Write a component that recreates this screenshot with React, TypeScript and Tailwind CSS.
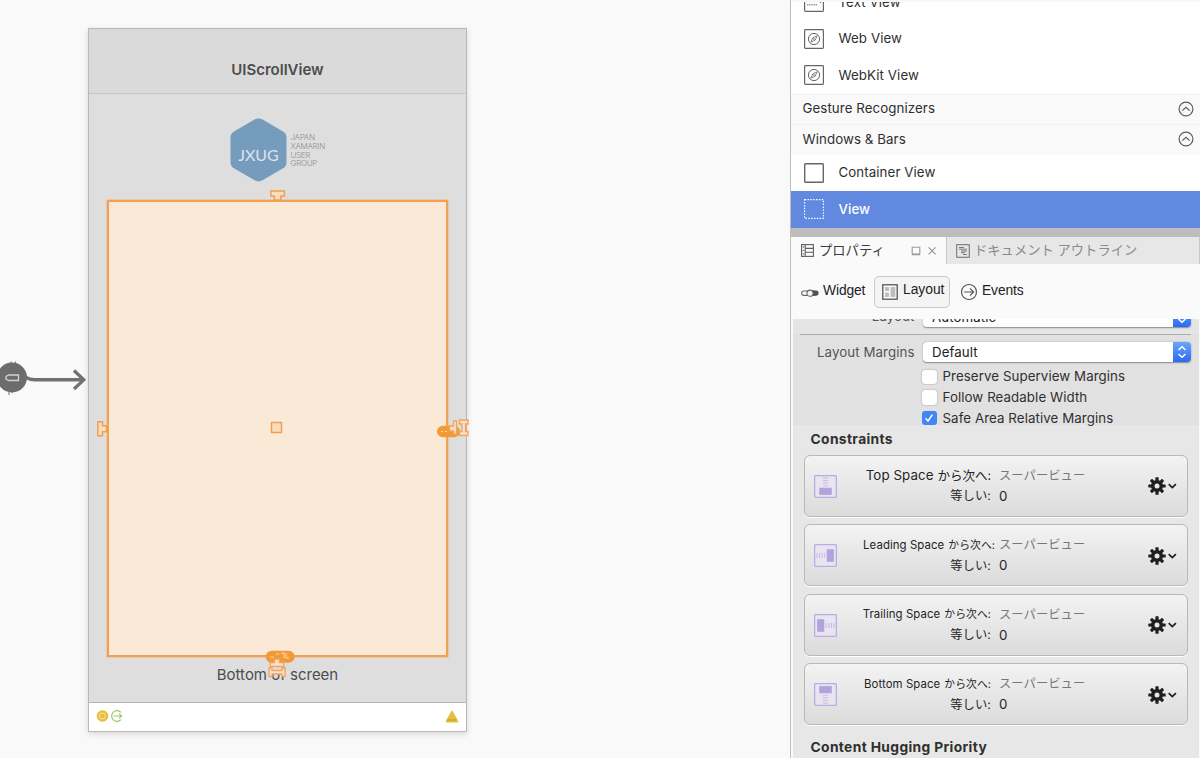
import type { ReactNode } from "react";

type Side = "top" | "leading" | "trailing" | "bottom";

type Constraint = {
  side: Side;
  name: string;
  nameClass: string;
  suffixClass: string;
};

const constraints: Constraint[] = [
  { side: "top", name: "Top Space", nameClass: "text-[13.3px]", suffixClass: "text-[12.6px] tracking-[-0.1px]" },
  { side: "leading", name: "Leading Space", nameClass: "text-[11.4px]", suffixClass: "-mr-1 text-[10.8px]" },
  { side: "trailing", name: "Trailing Space", nameClass: "text-[11.4px]", suffixClass: "text-[10.8px]" },
  { side: "bottom", name: "Bottom Space", nameClass: "text-[11.4px]", suffixClass: "text-[10.8px]" },
];

const rotations: Record<Side, number> = { top: 0, leading: -90, trailing: 90, bottom: 180 };

function CompassIcon() {
  return (
    <svg width="20" height="20" viewBox="0 0 20 20" fill="none" stroke="#666" className="shrink-0">
      <rect x="0.6" y="0.6" width="18.8" height="18.8" rx="0.8" strokeWidth="1.2" />
      <circle cx="10" cy="10" r="5.6" strokeWidth="1" />
      <path d="M13.1 6.9 11.2 11.2 6.9 13.1 8.8 8.8Z" strokeWidth="0.8" />
      <circle cx="10" cy="10" r="0.6" strokeWidth="0.6" />
    </svg>
  );
}

function TextViewIcon() {
  return (
    <svg width="20" height="20" viewBox="0 0 20 20" fill="none" stroke="#666" className="shrink-0">
      <rect x="0.6" y="0.6" width="18.8" height="18.8" rx="0.8" strokeWidth="1.2" />
      <path d="M3 12.8h10" stroke="#999" strokeWidth="1.6" strokeDasharray="1.2 0.6" />
      <path d="M16.5 9v2" strokeWidth="1.2" />
    </svg>
  );
}

function ChevronCircle() {
  return (
    <svg width="16" height="16" viewBox="0 0 16 16" fill="none" stroke="#5c5c5c" className="mb-px shrink-0">
      <circle cx="8" cy="8" r="6.9" strokeWidth="1.2" />
      <path d="M4.3 9.6 8 6.2l3.7 3.4" strokeWidth="1.2" />
    </svg>
  );
}

function ConstraintIcon({ side }: { side: Side }) {
  return (
    <svg width="23" height="23" viewBox="0 0 22 22" className="mt-px shrink-0">
      <rect x="0.6" y="0.6" width="20.8" height="20.8" rx="0.8" fill="#e8e5f0" stroke="#b9aee2" strokeWidth="1.2" />
      <g transform={`rotate(${rotations[side]} 11 11)`}>
        <rect x="5" y="12.2" width="12" height="6.8" fill="#b1a3dd" />
        <path d="M8.5 2.8h5M8.5 5.3h5M8.5 7.8h5M8.5 10.3h5" stroke="#c9c0e6" strokeWidth="1.1" />
      </g>
    </svg>
  );
}

function GearMenu() {
  return (
    <svg width="30" height="18" viewBox="0 0 30 18" className="mt-px shrink-0">
      <g fill="#1f1f1f">
        {[0, 45, 90, 135].map((angle) => (
          <rect key={angle} x="7.4" y="0.3" width="3.2" height="17.4" rx="0.5" transform={`rotate(${angle} 9 9)`} />
        ))}
        <circle cx="9" cy="9" r="6.1" />
      </g>
      <circle cx="9" cy="9" r="2.5" fill="#e7e7e7" />
      <path d="M20.7 7.2 24.3 10.6 27.9 7.2" fill="none" stroke="#1f1f1f" strokeWidth="1.7" />
    </svg>
  );
}

function LibraryRow({ icon, children, selected }: { icon: ReactNode; children: ReactNode; selected?: boolean }) {
  return (
    <div className={`flex h-[36.5px] items-center gap-[14.5px] pl-[13px] ${selected ? "bg-[#6289e0] font-medium text-white" : "bg-white"}`}>
      {icon}
      <span className="pt-px">{children}</span>
    </div>
  );
}

function LibraryHeader({ children }: { children: ReactNode }) {
  return (
    <div className="flex h-[30.5px] items-center justify-between border-t border-[#f2f2f2] bg-[#f9f9f9] pl-[11.5px] pr-[6.5px]">
      <span>{children}</span>
      <ChevronCircle />
    </div>
  );
}

function Library() {
  return (
    <div className="h-[227.5px] overflow-hidden border-t-2 border-[#f7f7f7] bg-white text-[13.3px] tracking-[0.08px] text-[#303030]">
      <div className="-mt-[18px]">
        <LibraryRow icon={<TextViewIcon />}>Text View</LibraryRow>
        <LibraryRow icon={<CompassIcon />}>Web View</LibraryRow>
        <LibraryRow icon={<CompassIcon />}>WebKit View</LibraryRow>
        <LibraryHeader>Gesture Recognizers</LibraryHeader>
        <LibraryHeader>Windows &amp; Bars</LibraryHeader>
        <LibraryRow
          icon={
            <svg width="20" height="20" viewBox="0 0 20 20" fill="none">
              <rect x="0.7" y="0.7" width="18.6" height="18.6" rx="0.8" stroke="#666" strokeWidth="1.4" />
            </svg>
          }
        >
          Container View
        </LibraryRow>
        <LibraryRow
          selected
          icon={
            <svg width="20" height="20" viewBox="0 0 20 20" fill="none">
              <rect x="0.6" y="0.6" width="18.8" height="18.8" stroke="#fff" strokeWidth="1.1" strokeDasharray="1.5 1.35" />
            </svg>
          }
        >
          View
        </LibraryRow>
      </div>
    </div>
  );
}

function Tabs() {
  return (
    <div className="flex h-[27px] text-[13.3px]">
      <div className="flex w-[155px] items-center bg-[#fafafa] pl-[10px] text-[#3c3c3c]">
        <svg width="13" height="13" viewBox="0 0 13 13" fill="none" stroke="#606060" strokeWidth="1.1">
          <rect x="0.6" y="0.6" width="11.8" height="11.8" />
          <path d="M4.2 1v11M4.5 4.4H12M4.5 8.3H12M1.6 3h1.5M1.6 6.5h1.5M1.6 10h1.5" />
        </svg>
        <span className="ml-[5px] w-[66px] whitespace-nowrap">プロパティ</span>
        <svg width="28" height="10" viewBox="0 0 28 10" fill="none" stroke="#999" className="ml-[26px]">
          <path d="M1.2 1.2h7.6v6.8H1.2zM1 8.6h8" strokeWidth="1.1" />
          <path d="m17.6 1.4 7 7m0-7-7 7" strokeWidth="1.2" />
        </svg>
      </div>
      <div className="flex flex-1 items-center border-l border-[#c9c9c9] bg-[#e7e7e7] pl-[9px] text-[#8b8b8b]">
        <svg width="14" height="14" viewBox="0 0 14 14" fill="none" stroke="#777" strokeWidth="1.1">
          <rect x="0.7" y="0.7" width="12.6" height="12.6" />
          <path d="M3 3.5h5M3 5.2h8M5 7h6M5 8.7h4M7 10.5h4" strokeWidth="1" />
        </svg>
        <span className="ml-[4px] whitespace-nowrap">ドキュメント アウトライン</span>
      </div>
      <div className="w-px bg-[#c9c9c9]" />
    </div>
  );
}

function Toolbar() {
  return (
    <div className="flex h-[55px] items-center bg-[#fafafa] pl-[10px] text-[13.8px] text-[#222]">
      <svg width="18" height="10" viewBox="0 0 18 10" className="mt-[2px]">
        <rect x="0.7" y="3" width="14" height="4.4" rx="2.2" fill="#fff" stroke="#666" strokeWidth="1.1" />
        <path d="M10 2.5h5a2.6 2.6 0 0 1 0 5.2h-5z" fill="#505050" />
        <circle cx="9" cy="5.2" r="3.1" fill="#f5f5f5" stroke="#666" strokeWidth="1.1" />
      </svg>
      <span className="-mt-px ml-[4px] w-[42px] font-['Liberation_Sans'] tracking-[-0.1px]">Widget</span>
      <div className="ml-[9px] flex h-[32px] w-[76px] items-center rounded-[5px] border border-[#c9c9c9] bg-[#f4f4f4] pl-[7px]">
        <svg width="16" height="16" viewBox="0 0 16 16">
          <rect x="0.8" y="0.8" width="14.4" height="14.4" fill="#fafafa" stroke="#555" strokeWidth="1.3" />
          <path d="M3 3h4v4H3zM3 8.5h4V13H3zM8.5 3h4.8v10H8.5z" fill="#bdbdbd" />
        </svg>
        <span className="-mt-[2px] ml-[5px] font-['Liberation_Sans']">Layout</span>
      </div>
      <svg width="18" height="18" viewBox="0 0 18 18" fill="none" stroke="#555" strokeWidth="1.2" className="ml-[10px] mt-px">
        <circle cx="9" cy="9" r="7.5" />
        <path d="M4.2 9h9.3M10 5.4 13.6 9 10 12.6" />
      </svg>
      <span className="-mt-px ml-[4px] font-['Liberation_Sans'] tracking-[-0.1px]">Events</span>
    </div>
  );
}

function Select({ children }: { children: ReactNode }) {
  return (
    <div className="flex h-[20.5px] w-[268px] overflow-hidden rounded-[4px] bg-white shadow-[0_0.5px_1.5px_rgba(0,0,0,0.4)]">
      <span className="flex-1 pl-[9px] leading-[20.5px] text-[#222]">{children}</span>
      <span className="flex w-[18px] items-center justify-center bg-gradient-to-b from-[#6da5fa] to-[#2a69f0]">
        <svg width="10" height="14" viewBox="0 0 10 14" fill="none" stroke="#fff" strokeWidth="1.5">
          <path d="M1.5 5 5 1.8 8.5 5M1.5 9 5 12.2 8.5 9" />
        </svg>
      </span>
    </div>
  );
}

function Check({ label, checked }: { label: string; checked?: boolean }) {
  return (
    <div className="flex h-[20.7px] items-center gap-[6px] pl-[129px] text-[#303030]">
      <span className={`-mt-px flex h-[14.5px] w-[14.5px] items-center justify-center rounded-[3px] ${checked ? "bg-[#4285f5]" : "bg-white shadow-[0_0_1.5px_rgba(0,0,0,0.45)]"}`}>
        {checked && (
          <svg width="10" height="10" viewBox="0 0 10 10" fill="none" stroke="#fff" strokeWidth="1.5">
            <path d="M1.6 5.3 4 8 8.4 1.6" />
          </svg>
        )}
      </span>
      <span>{label}</span>
    </div>
  );
}

function ConstraintCard({ constraint }: { constraint: Constraint }) {
  return (
    <div className="flex h-[62px] items-center rounded-[6px] border-[1.5px] border-[#b8b8b8] bg-gradient-to-b from-[#f3f3f3] to-[#dbdbdb] pl-[9px] pr-[9px] shadow-[0_1px_0_#fff]">
      <ConstraintIcon side={constraint.side} />
      <div className="flex flex-1 flex-col whitespace-nowrap pt-px text-[12.3px] text-[#252525]">
        <div className="flex h-[21px] items-center">
          <div className="flex w-[154.5px] shrink-0 items-baseline justify-end gap-[4px]">
            <span className={constraint.nameClass}>{constraint.name}</span>
            <span className={constraint.suffixClass}>から次へ:</span>
          </div>
          <span className="ml-[8px] tracking-[0.05px] text-[#777]">スーパービュー</span>
        </div>
        <div className="flex h-[20px] items-center">
          <span className="w-[154.5px] shrink-0 text-right">等しい:</span>
          <span className="ml-[8px] text-[13.3px]">0</span>
        </div>
      </div>
      <GearMenu />
    </div>
  );
}

function Properties() {
  return (
    <div className="ml-[2px] mr-px h-[439px] overflow-hidden bg-[#e7e7e7] text-[13.3px] tracking-[0.08px]">
      <div className="h-[106px] bg-[#e1e1e1]">
        <div className="h-[15px] overflow-hidden bg-[#e5e5e5]">
          <div className="-mt-[12.5px] flex items-center">
            <span className="w-[121.5px] text-right text-[#555]">Layout</span>
            <div className="ml-[8.5px]">
              <Select>Automatic</Select>
            </div>
          </div>
        </div>
        <div className="ml-[7px] mr-[8px] h-px bg-[#adadad]" />
        <div className="mb-[4.5px] mt-[6.5px] flex items-center">
          <span className="w-[121.5px] pt-px text-right text-[#555]">Layout Margins</span>
          <div className="ml-[8.5px]">
            <Select>Default</Select>
          </div>
        </div>
        <Check label="Preserve Superview Margins" />
        <Check label="Follow Readable Width" />
        <Check label="Safe Area Relative Margins" checked />
      </div>
      <h2 className="flex h-[29px] items-center pl-[17.5px] text-[13.8px] font-bold tracking-[0.36px] text-[#303030]">Constraints</h2>
      <div className="ml-[10.5px] mr-[11px] mt-[0.5px] flex flex-col gap-[7.5px]">
        {constraints.map((constraint) => (
          <ConstraintCard key={constraint.side} constraint={constraint} />
        ))}
      </div>
      <h2 className="mt-[12px] whitespace-nowrap pl-[17.5px] text-[13.8px] font-bold tracking-[0.36px] text-[#303030]">Content Hugging Priority</h2>
    </div>
  );
}

function Logo() {
  return (
    <div className="flex items-start pl-[141px] pt-[24px]">
      <div className="grid h-[64px] w-[57px] place-items-center">
        <svg width="57" height="64" viewBox="0 0 57 64" className="col-start-1 row-start-1">
          <path d="M24.5 1.6Q28.5-.6 32.5 1.6L53 13.6Q56.5 15.8 56.5 19.5V44.5Q56.5 48.2 53 50.3L32.5 62.3Q28.5 64.5 24.5 62.3L4 50.3Q.5 48.2.5 44.5V19.5Q.5 15.8 4 13.6Z" fill="#759bbd" />
        </svg>
        <span className="col-start-1 row-start-1 mt-[10px] font-['Lato'] text-[16px] leading-none text-[#dce5ee]">JXUG</span>
      </div>
      <div className="ml-[3.5px] mt-[15px] text-[8px] font-light leading-[8.8px] tracking-[-0.3px] text-[#8f8f8f]">
        <p>JAPAN</p>
        <p>XAMARIN</p>
        <p>USER</p>
        <p>GROUP</p>
      </div>
    </div>
  );
}

function Handles() {
  return (
    <svg width="480" height="500" viewBox="0 185 480 500" className="pointer-events-none absolute left-0 top-[185px]">
      <g fill="#fbdcbd" stroke="#f09f4f" strokeWidth="1.5" strokeLinejoin="round">
        <path d="M270.800 191h13.600v5h-3.600v4h-6.400v-4h-3.600z" />
        <path d="M97.800 421.800h4.700v4h4v6h-4v4h-4.700z" />
        <rect x="271.500" y="422.500" width="10" height="10" />
      </g>
      <rect x="437" y="425.700" width="23" height="11.500" rx="5.750" fill="#f39a38" />
      <path d="M441 431.500h2m2 0h2m2-1.500h3" stroke="#fbd7b0" />
      <rect x="265.700" y="650.700" width="29" height="12" rx="6" fill="#f39a38" />
      <path d="M270 657h4m2-3h3m2-1h3v5m2-5v5h3" fill="none" stroke="#fbd7b0" />
      <g fill="#fbe1c8" stroke="#f2a45a" strokeWidth="1.3">
        <path d="M456.500 421v13h-3v-3h-4v-5h4v-5z" />
        <path d="M459.500 420h8.500v4h-2.500v7.500h2.500v4h-8.500v-4h2.500v-7.500h-2.500z" />
        <path d="M274.500 659h5v3.500h4.200v4h-13.500v-4h4.300z" />
        <path d="M269 668h3v2.500h10V668h3v8.500h-3V674h-10v2.500h-3z" />
      </g>
    </svg>
  );
}

function EntryArrow() {
  return (
    <svg width="88" height="40" viewBox="0 360 88 40" className="absolute left-0 top-[360px]">
      <path d="M11 361.500v4M15.500 361.500v4M9 390v5M12 390v3" stroke="#717171" />
      <circle cx="12" cy="377.500" r="15" fill="#6c6c6c" />
      <path d="M9 375h9.500v5.500H9L6 379v-2.500z" fill="none" stroke="#d2d2d2" strokeWidth="1.3" />
      <path d="M25 377q5 2.800 10 2.800h49" fill="none" stroke="#717171" strokeWidth="3.500" />
      <path d="m74 370.500 9.800 9.300-9.800 9.200" fill="none" stroke="#717171" strokeWidth="3.200" />
    </svg>
  );
}

function Canvas() {
  return (
    <div className="relative w-[790px] shrink-0 bg-[#f9f9f9]">
      <div className="ml-[88px] mt-[28px] flex h-[704px] w-[379px] flex-col border border-[#b8b8b8] bg-[#dedede] shadow-[0_2px_6px_rgba(0,0,0,0.14)]">
        <div className="flex h-[65px] shrink-0 items-end justify-center border-b border-[#c6c6c6] bg-[#dadada] pb-[12px] text-[15px] font-semibold text-[#4d4d4d]">
          UIScrollView
        </div>
        <div className="h-[106px] shrink-0">
          <Logo />
        </div>
        <div className="ml-[17.500px] h-[457px] w-[341.500px] shrink-0 border-2 border-[#f1a153] bg-[#fbe9d8] shadow-[0_0_0_0.5px_#f3b376]" />
        <div className="flex-1 pt-[7px] text-center text-[15px] text-[#4d4d4d]">Bottom of screen</div>
        <div className="flex h-[29px] shrink-0 items-center border-t border-[#b5b5b5] bg-white pb-[2px] pl-[7px] pr-[7px]">
          <svg width="27" height="14" viewBox="0 0 27 14" fill="none">
            <circle cx="6.500" cy="7" r="5.800" fill="#e9bd3b" />
            <rect x="3.800" y="4.300" width="5.400" height="5.400" rx="1" stroke="#f7e5ae" />
            <path d="M25 3.300A5.400 5.400 0 1 0 25 10.700M17.500 7h8M23 4.600 25.600 7 23 9.400" stroke="#98cc66" strokeWidth="1.200" />
          </svg>
          <svg width="14" height="13" viewBox="0 0 14 13" className="ml-auto">
            <path d="M6.300 1q.7-1 1.400 0l5.500 10q.4 1.400-1 1.400H1.800q-1.400 0-1-1.400z" fill="#e6bf3d" />
            <path d="M2.500 10h9" stroke="#ad8b1f" strokeDasharray="2 1" />
          </svg>
        </div>
      </div>
      <EntryArrow />
      <Handles />
    </div>
  );
}

function App() {
  return (
    <main className="flex h-[758px] w-[1200px] overflow-hidden font-['Inter','Noto_Sans_CJK_JP',sans-serif]">
      <Canvas />
      <aside className="w-[410px] border-l border-[#bebebe] bg-[#fafafa]">
        <Library />
        <div className="h-[9.500px] bg-[#bdbdbd]" />
        <Tabs />
        <Toolbar />
        <Properties />
      </aside>
    </main>
  );
}

export default App;
